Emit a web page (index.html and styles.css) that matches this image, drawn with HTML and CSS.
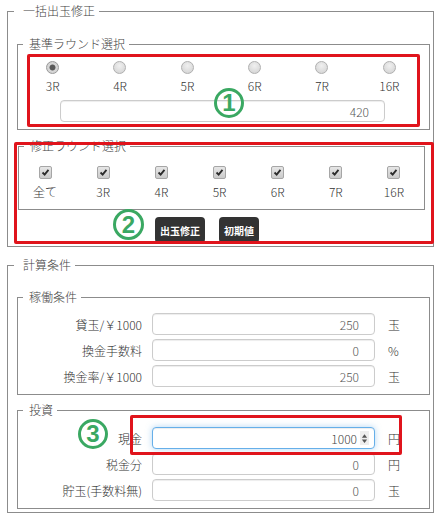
FILE: index.html
```html
<!DOCTYPE html>
<html lang="ja">
<head>
  <meta charset="UTF-8">
  <meta name="viewport" content="width=device-width, initial-scale=1.0">
  <title>一括出玉修正</title>
  <link rel="stylesheet" href="styles.css">
</head>
<body>

<div class="page">
  <fieldset class="group">
    <legend>一括出玉修正</legend>

    <fieldset class="sub">
      <legend>基準ラウンド選択</legend>
      <div class="round-body">
        <div class="radio-row">
          <div class="opt"><span class="radio is-on"></span><span>3R</span></div>
          <div class="opt"><span class="radio"></span><span>4R</span></div>
          <div class="opt"><span class="radio"></span><span>5R</span></div>
          <div class="opt"><span class="radio"></span><span>6R</span></div>
          <div class="opt"><span class="radio"></span><span>7R</span></div>
          <div class="opt"><span class="radio"></span><span>16R</span></div>
        </div>
        <input class="ctl base-count" type="text" value="420">
        <span class="mark mark-1"></span>
        <span class="num num-1">1</span>
      </div>
    </fieldset>

    <div class="fix-area">
      <fieldset class="sub sub-fix">
        <legend>修正ラウンド選択</legend>
        <div class="check-row">
          <div class="opt"><span class="check"><svg viewBox="0 0 13 13"><path d="M3 6.5 L5.5 9 L10 3.5"/></svg></span><span>全て</span></div>
          <div class="opt"><span class="check"><svg viewBox="0 0 13 13"><path d="M3 6.5 L5.5 9 L10 3.5"/></svg></span><span>3R</span></div>
          <div class="opt"><span class="check"><svg viewBox="0 0 13 13"><path d="M3 6.5 L5.5 9 L10 3.5"/></svg></span><span>4R</span></div>
          <div class="opt"><span class="check"><svg viewBox="0 0 13 13"><path d="M3 6.5 L5.5 9 L10 3.5"/></svg></span><span>5R</span></div>
          <div class="opt"><span class="check"><svg viewBox="0 0 13 13"><path d="M3 6.5 L5.5 9 L10 3.5"/></svg></span><span>6R</span></div>
          <div class="opt"><span class="check"><svg viewBox="0 0 13 13"><path d="M3 6.5 L5.5 9 L10 3.5"/></svg></span><span>7R</span></div>
          <div class="opt"><span class="check"><svg viewBox="0 0 13 13"><path d="M3 6.5 L5.5 9 L10 3.5"/></svg></span><span>16R</span></div>
        </div>
      </fieldset>
      <div class="actions">
        <button class="btn">出玉修正</button>
        <button class="btn">初期値</button>
      </div>
      <span class="mark mark-2"></span>
      <span class="num num-2">2</span>
    </div>
  </fieldset>

  <fieldset class="group group-calc">
    <legend>計算条件</legend>

    <fieldset class="sub">
      <legend>稼働条件</legend>
      <div class="form-rows">
        <label class="row-label">貸玉/￥1000</label>
        <input class="ctl" type="text" value="250">
        <span class="unit">玉</span>

        <label class="row-label">換金手数料</label>
        <input class="ctl" type="text" value="0">
        <span class="unit">%</span>

        <label class="row-label">換金率/￥1000</label>
        <input class="ctl" type="text" value="250">
        <span class="unit">玉</span>
      </div>
    </fieldset>

    <fieldset class="sub sub-invest">
      <legend>投資</legend>
      <div class="form-rows invest-rows">
        <label class="row-label">現金</label>
        <div class="ctl field is-focus">
          <input type="text" value="1000">
          <span class="spin"><svg viewBox="0 0 8 12"><path d="M4 1 L7 5 L1 5 Z M4 11 L7 7 L1 7 Z"/></svg></span>
        </div>
        <span class="unit">円</span>

        <label class="row-label">税金分</label>
        <input class="ctl" type="text" value="0">
        <span class="unit">円</span>

        <label class="row-label">貯玉(手数料無)</label>
        <input class="ctl" type="text" value="0">
        <span class="unit">玉</span>

        <span class="mark mark-3"></span>
        <span class="num num-3">3</span>
      </div>
    </fieldset>
  </fieldset>
</div>

</body>
</html>
```

FILE: styles.css
```css
body {
  margin: 0;
  padding: 0;
  font-family: "Noto Sans CJK JP", "Noto Sans", sans-serif;
  font-size: 12px;
  font-weight: 300;
  color: #333;
  background-color: white;
}

.page {
  padding: 3px 10px 0 7px;
}

fieldset {
  margin: 0;
  min-width: 0;
  border: 1px solid #8c8c8c;
}

legend {
  font-size: 12px;
  line-height: 16px;
  color: #444;
}

/* outer groups */
.group {
  padding: 17px 3px 3px 9px;
}

.group > legend {
  margin-left: -3px;
  padding: 0 4px 0 9px;
}

.group-calc {
  margin-top: 10px;
  padding-top: 16px;
}

/* inner groups */
.sub {
  padding: 0;
}

.sub > legend {
  margin-left: 5px;
  padding: 0 4px 0 6px;
}

.sub-invest {
  margin-top: 7px;
}

/* base round */
.round-body {
  position: relative;
  padding: 9px 0 7px;
}

.radio-row {
  display: grid;
  grid-template-columns: repeat(6, 1fr);
  margin: 0 6px 0 1px;
}

.opt {
  display: flex;
  flex-direction: column;
  align-items: center;
  line-height: 16px;
}

.radio {
  width: 13px;
  height: 13px;
  box-sizing: border-box;
  border: 1px solid #b0b0b0;
  border-radius: 50%;
  background: radial-gradient(circle at 50% 35%, #f0f0f0, #d0d0d0);
  margin-bottom: 4px;
}

.radio.is-on {
  background: radial-gradient(circle, #5a5a5a 0 2.6px, #d8d8d8 3.4px, #cdcdcd 100%);
  border-color: #999;
}

.ctl {
  box-sizing: border-box;
  height: 22px;
  border: 1px solid #ccc;
  border-radius: 4px;
  padding: 0 15px 0 6px;
  text-align: right;
  font-family: inherit;
  font-size: 12px;
  font-weight: 300;
  color: #555;
  background: white;
  box-shadow: inset 0 1px 1px rgba(0, 0, 0, 0.075);
}

.base-count {
  display: block;
  width: 325px;
  margin: 6px 0 0 42px;
}

/* correction rounds */
.fix-area {
  position: relative;
  margin-top: 8px;
}

.sub-fix {
  margin: 0 5px 0 1px;
}

.check-row {
  display: grid;
  grid-template-columns: repeat(7, 1fr);
  margin: 0 1px 0 -3px;
  padding: 12px 0 9px;
}

.check {
  width: 13px;
  height: 13px;
  box-sizing: border-box;
  border: 1px solid #a6a6a6;
  border-radius: 2px;
  background: linear-gradient(#e6e6e6, #cbcbcb);
  margin-bottom: 5px;
}

.check svg {
  display: block;
  width: 11px;
  height: 11px;
  fill: none;
  stroke: #2b2b2b;
  stroke-width: 2.2;
}

.actions {
  display: flex;
  gap: 14px;
  margin-top: 7px;
  padding-left: 138px;
}

.btn {
  height: 26px;
  padding: 0 5px;
  border: none;
  border-radius: 4px;
  background-color: #333;
  color: white;
  font-family: inherit;
  font-size: 10px;
  font-weight: bold;
}

/* form rows */
.form-rows {
  display: grid;
  grid-template-columns: 124px 223px 1fr;
  column-gap: 10px;
  row-gap: 4px;
  align-items: center;
  padding: 8px 0 7px;
}

.invest-rows {
  position: relative;
  padding-top: 9px;
}

.row-label {
  text-align: right;
}

.form-rows .ctl {
  width: 223px;
}

.unit {
  padding-left: 3px;
}

.field {
  display: flex;
  align-items: center;
  padding: 0 5px 0 6px;
}

.field input {
  flex: 1;
  min-width: 0;
  border: none;
  outline: none;
  padding: 0 3px 0 0;
  text-align: right;
  font-family: inherit;
  font-size: 12px;
  font-weight: 300;
  color: #444;
  background: transparent;
}

.field.is-focus {
  border-color: #66afe9;
  box-shadow: inset 0 1px 1px rgba(0, 0, 0, 0.075), 0 0 6px rgba(102, 175, 233, 0.5);
}

.spin {
  width: 9px;
  height: 14px;
  background-color: #eee;
  display: flex;
  align-items: center;
  justify-content: center;
}

.spin svg {
  width: 7px;
  height: 11px;
  fill: #555;
}

/* annotations */
.mark {
  position: absolute;
  box-sizing: border-box;
  border: 3px solid #e0141c;
  border-radius: 2px;
  pointer-events: none;
}

.mark-1 {
  left: 9px;
  top: 2px;
  width: 393px;
  height: 73px;
}

.mark-2 {
  left: -3px;
  top: 4px;
  width: 420px;
  height: 102px;
}

.mark-3 {
  left: 112px;
  top: -3px;
  width: 272px;
  height: 40px;
}

.num {
  position: absolute;
  box-sizing: border-box;
  width: 30px;
  height: 30px;
  border: 3.5px solid #3aa862;
  border-radius: 50%;
  display: flex;
  align-items: center;
  justify-content: center;
  font-family: "Liberation Sans", Arial, sans-serif;
  font-size: 24px;
  font-weight: bold;
  line-height: 1;
  color: #3aa862;
  background-color: white;
}

.num-1 {
  left: 196px;
  top: 36px;
  background-color: transparent;
}

.num-2 {
  left: 96px;
  top: 71px;
  width: 31px;
  height: 31px;
}

.num-3 {
  left: 60px;
  top: 1px;
}
```
